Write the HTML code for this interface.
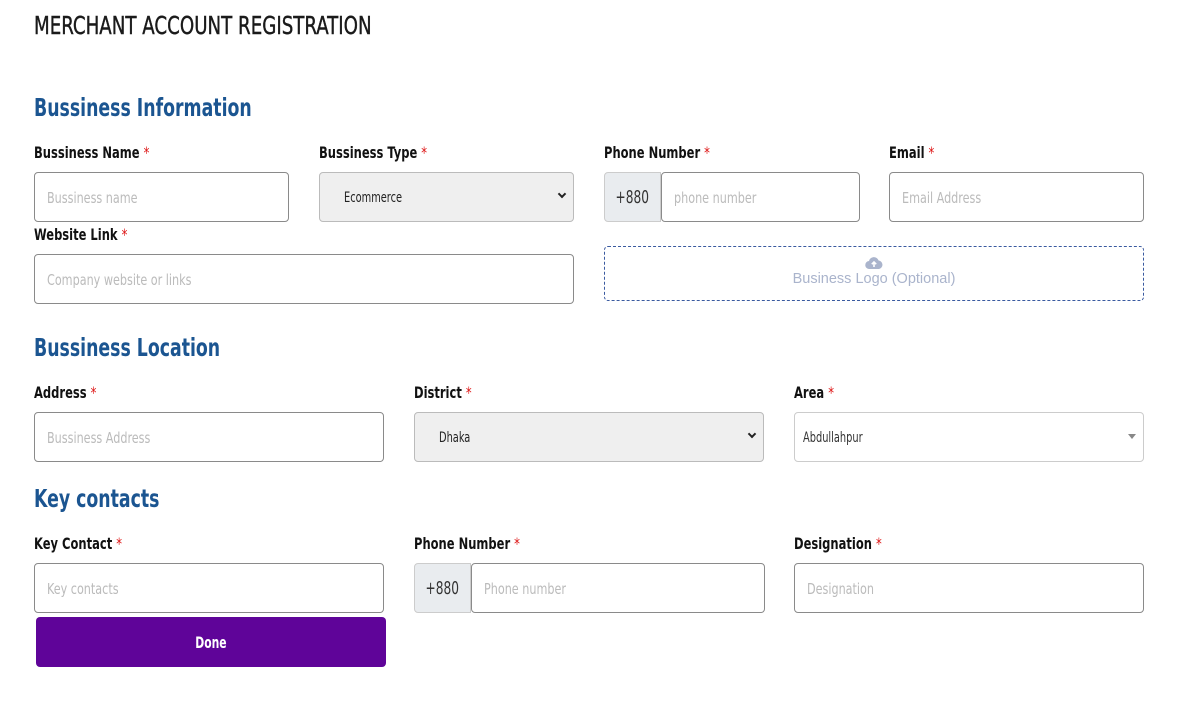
<!DOCTYPE html>
<html><head><meta charset="utf-8"><style>
*{box-sizing:border-box;margin:0;padding:0}
body{width:1181px;height:707px;background:#fff;position:relative;overflow:hidden;font-family:"DejaVu Sans Condensed","Liberation Sans",sans-serif;}
.a{position:absolute}
.n{display:inline-block;transform-origin:0 50%;white-space:nowrap}
.t{left:34px;top:11px;font-size:25px;color:#1a1a1a;-webkit-text-stroke:0.4px #1a1a1a}
.t .n{transform:scaleX(.81)}
.h{left:34px;font-size:25px;font-weight:bold;color:#1b5591}
.h .n{transform:scaleX(.77)}
.l{font-size:16px;font-weight:bold;color:#111;line-height:20px}
.l .n{transform:scaleX(.8)}
.l b{color:#d11;font-weight:normal}
.i{height:50px;border:1px solid #8a8a8a;border-radius:4px;background:#fff;font-size:15px;color:#bbb;padding-left:12px;line-height:51px}
.i .n{transform:scaleX(.83)}
.s{background:#efefef;border-color:#bbb;color:#222;font-size:14px}
.s .n{transform:scaleX(.78)}
.ad{height:50px;background:#e9ecef;border:1px solid #ccc;border-radius:4px 0 0 4px;color:#333;font-size:18px;line-height:49px;text-align:center}
.ad .n{transform:scaleX(.75);transform-origin:50% 50%}
.ch{position:absolute;right:8px;top:18px;width:6px;height:6px;border-right:2px solid #222;border-bottom:2px solid #222;transform:rotate(45deg)}
</style></head><body>
<div class="a t"><span class="n">MERCHANT ACCOUNT REGISTRATION</span></div>
<div class="a h" style="top:93px"><span class="n">Bussiness Information</span></div>
<div class="a l" style="left:34px;top:143px"><span class="n">Bussiness Name <b>*</b></span></div>
<div class="a l" style="left:319px;top:143px"><span class="n">Bussiness Type <b>*</b></span></div>
<div class="a l" style="left:604px;top:143px"><span class="n">Phone Number <b>*</b></span></div>
<div class="a l" style="left:889px;top:143px"><span class="n">Email <b>*</b></span></div>
<div class="a i" style="left:34px;top:172px;width:255px"><span class="n">Bussiness name</span></div>
<div class="a i s" style="left:319px;top:172px;width:255px;padding-left:24px"><span class="n">Ecommerce</span><span class="ch"></span></div>
<div class="a ad" style="left:604px;top:172px;width:57px"><span class="n">+880</span></div>
<div class="a i" style="left:661px;top:172px;width:199px"><span class="n">phone number</span></div>
<div class="a i" style="left:889px;top:172px;width:255px"><span class="n">Email Address</span></div>
<div class="a l" style="left:34px;top:225px"><span class="n">Website Link <b>*</b></span></div>
<div class="a i" style="left:34px;top:254px;width:540px"><span class="n">Company website or links</span></div>
<div class="a" style="left:604px;top:246px;width:540px;height:55px;border:1px dashed #3a5aa0;border-radius:4px;text-align:center;font-family:'Liberation Sans',sans-serif;color:#aab4cc;font-size:14.5px">
<svg width="18" height="14" viewBox="0 0 18 14" style="margin-top:9px;display:block;margin-left:auto;margin-right:auto"><path d="M4.5 13a4 4 0 0 1-.5-8A5 5 0 0 1 13.6 4.5 4.3 4.3 0 0 1 14 13z" fill="#aab4cc"/><path d="M9 11V6M6.8 8.2 9 6l2.2 2.2" stroke="#fff" stroke-width="1.6" fill="none"/></svg>
<div style="margin-top:1px">Business Logo (Optional)</div></div>
<div class="a h" style="top:333px"><span class="n">Bussiness Location</span></div>
<div class="a l" style="left:34px;top:383px"><span class="n">Address <b>*</b></span></div>
<div class="a l" style="left:414px;top:383px"><span class="n">District <b>*</b></span></div>
<div class="a l" style="left:794px;top:383px"><span class="n">Area <b>*</b></span></div>
<div class="a i" style="left:34px;top:412px;width:350px"><span class="n">Bussiness Address</span></div>
<div class="a i s" style="left:414px;top:412px;width:350px;padding-left:24px"><span class="n">Dhaka</span><span class="ch"></span></div>
<div class="a i s" style="left:794px;top:412px;width:350px;background:#fff;border-color:#ccc;color:#333;padding-left:8px"><span class="n">Abdullahpur</span><span style="position:absolute;right:7px;top:21px;border:4px solid transparent;border-top:5px solid #888"></span></div>
<div class="a h" style="top:484px"><span class="n">Key contacts</span></div>
<div class="a l" style="left:34px;top:534px"><span class="n">Key Contact <b>*</b></span></div>
<div class="a l" style="left:414px;top:534px"><span class="n">Phone Number <b>*</b></span></div>
<div class="a l" style="left:794px;top:534px"><span class="n">Designation <b>*</b></span></div>
<div class="a i" style="left:34px;top:563px;width:350px"><span class="n">Key contacts</span></div>
<div class="a ad" style="left:414px;top:563px;width:57px"><span class="n">+880</span></div>
<div class="a i" style="left:471px;top:563px;width:294px"><span class="n">Phone number</span></div>
<div class="a i" style="left:794px;top:563px;width:350px"><span class="n">Designation</span></div>
<div class="a" style="left:36px;top:617px;width:350px;height:50px;background:#5f0499;border-radius:4px;color:#fff;font-weight:bold;font-size:16px;text-align:center;line-height:51px"><span class="n" style="transform:scaleX(.75);transform-origin:50% 50%">Done</span></div>
</body></html>
